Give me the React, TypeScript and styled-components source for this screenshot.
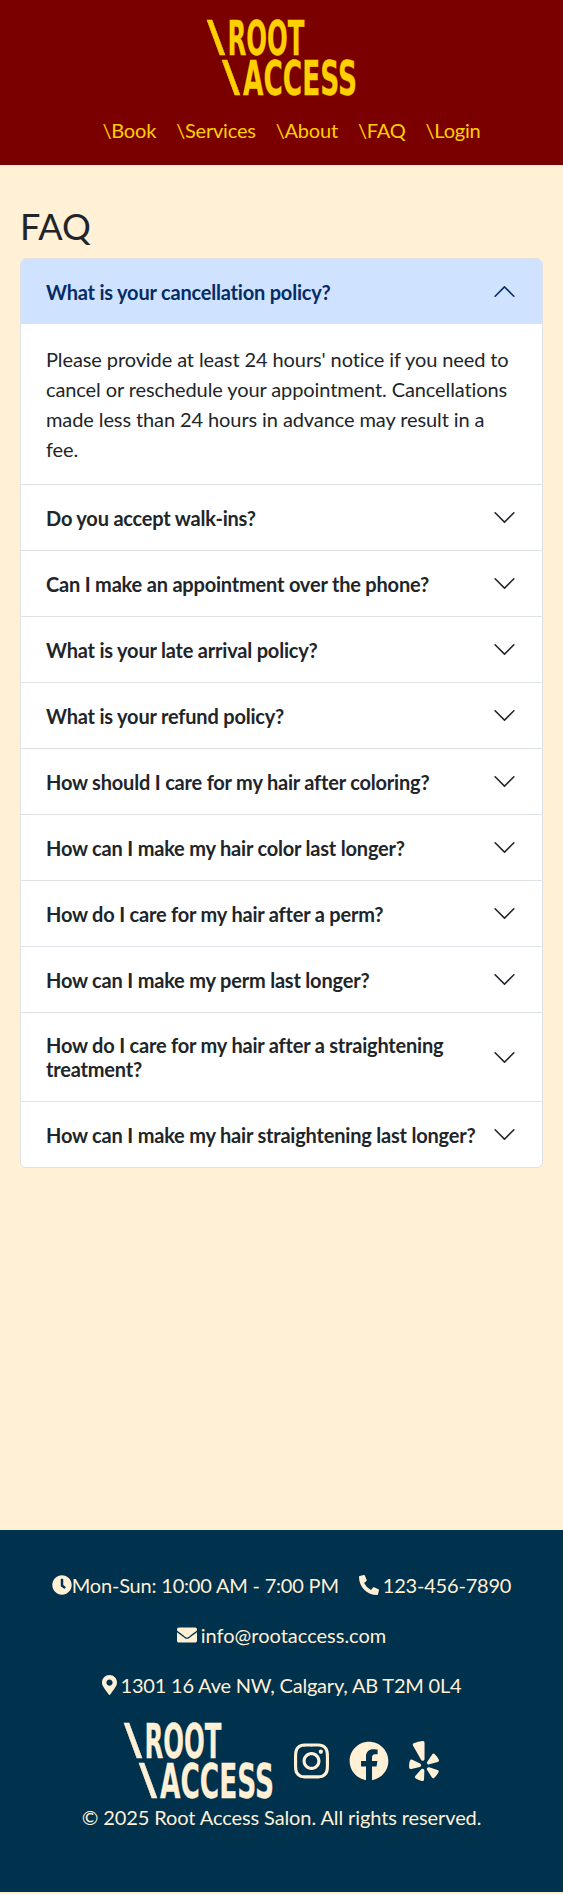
import React from 'react';
import styled, { createGlobalStyle } from 'styled-components';
import {
  FaClock,
  FaPhoneAlt,
  FaEnvelope,
  FaMapMarkerAlt,
  FaInstagram,
  FaFacebook,
  FaYelp,
} from 'react-icons/fa';

const QUESTIONS = [
  'Do you accept walk-ins?',
  'Can I make an appointment over the phone?',
  'What is your late arrival policy?',
  'What is your refund policy?',
  'How should I care for my hair after coloring?',
  'How can I make my hair color last longer?',
  'How do I care for my hair after a perm?',
  'How can I make my perm last longer?',
  'How do I care for my hair after a straightening treatment?',
  'How can I make my hair straightening last longer?',
];

const NAV_LINKS = ['\\Book', '\\Services', '\\About', '\\FAQ', '\\Login'];

const GlobalStyle = createGlobalStyle`
  * {
    box-sizing: border-box;
  }

  html,
  body {
    margin: 0;
    padding: 0;
    background: #fff0d6;
  }

  body {
    font-family: Lato, 'Liberation Sans', sans-serif;
    font-size: 20px;
    line-height: 1.5;
    letter-spacing: -0.2px;
    color: #212529;
  }
`;

function Logo({ color }: { color: string }) {
  return (
    <LogoSvg viewBox="0 0 150 75" width={150} height={75} fill={color} stroke={color} role="img" aria-label="Root Access">
      <text className="slash" x="0" y="35" textLength="18" lengthAdjust="spacingAndGlyphs">
        \
      </text>
      <text x="20.5" y="35" textLength="77" lengthAdjust="spacingAndGlyphs">
        ROOT
      </text>
      <text className="slash" x="15" y="75" textLength="18" lengthAdjust="spacingAndGlyphs">
        \
      </text>
      <text x="36" y="75" textLength="114" lengthAdjust="spacingAndGlyphs">
        ACCESS
      </text>
    </LogoSvg>
  );
}

function Chevron({ up }: { up?: boolean }) {
  return (
    <ChevronSvg viewBox="0 0 16 16" $up={up}>
      <path
        fillRule="evenodd"
        d="M1.646 4.646a.5.5 0 0 1 .708 0L8 10.293l5.646-5.647a.5.5 0 0 1 .708.708l-6 6a.5.5 0 0 1-.708 0l-6-6a.5.5 0 0 1 0-.708z"
      />
    </ChevronSvg>
  );
}

export default function App() {
  return (
    <Page>
      <GlobalStyle />
      <Header>
        <Logo color="#ffd000" />
        <Nav>
          {NAV_LINKS.map((link) => (
            <NavLink key={link}>{link}</NavLink>
          ))}
        </Nav>
      </Header>

      <Main>
        <Title>FAQ</Title>
        <Accordion>
          <Item>
            <Question $open>
              <span>What is your cancellation policy?</span>
              <Chevron up />
            </Question>
            <Answer>
              Please provide at least 24 hours' notice if you need to cancel or reschedule your
              appointment. Cancellations made less than 24 hours in advance may result in a fee.
            </Answer>
          </Item>
          {QUESTIONS.map((question) => (
            <Item key={question}>
              <Question>
                <span>{question}</span>
                <Chevron />
              </Question>
            </Item>
          ))}
        </Accordion>
      </Main>

      <Footer>
        <ContactRow>
          <Contact $gap={0}>
            <FaClock size={20} />
            Mon-Sun: 10:00 AM - 7:00 PM
          </Contact>
          <Contact>
            <FaPhoneAlt size={20} />
            123-456-7890
          </Contact>
        </ContactRow>
        <ContactRow>
          <Contact $spacing={0}>
            <FaEnvelope size={20} />
            info@rootaccess.com
          </Contact>
        </ContactRow>
        <ContactRow>
          <Contact>
            <MarkerIcon />
            1301 16 Ave NW, Calgary, AB T2M 0L4
          </Contact>
        </ContactRow>
        <BrandRow>
          <Logo color="#fff0d6" />
          <InstagramIcon />
          <FacebookIcon />
          <YelpIcon />
        </BrandRow>
        <Copyright>© 2025 Root Access Salon. All rights reserved.</Copyright>
      </Footer>
    </Page>
  );
}

const Page = styled.div`
  display: flex;
  flex-direction: column;
  min-height: 1894px;
  padding-bottom: 2px;
`;

const LogoSvg = styled.svg`
  display: block;
  flex: none;
  overflow: visible;

  text {
    font-family: 'DejaVu Sans', sans-serif;
    font-weight: 700;
    font-size: 48px;
    letter-spacing: 0;
    stroke-width: 0.3px;
  }

  .slash {
    font-family: 'Liberation Sans', sans-serif;
    font-weight: 400;
    stroke-width: 0.4px;
  }
`;

const Header = styled.header`
  display: flex;
  flex-direction: column;
  align-items: center;
  height: 165px;
  padding-top: 20px;
  background: #7a0000;
`;

const Nav = styled.nav`
  display: flex;
  justify-content: center;
  gap: 20px;
  margin-top: 20px;
  padding-left: 20px;
`;

const NavLink = styled.a`
  color: #ffd000;
  line-height: 30px;
`;

const Main = styled.main`
  flex: 1;
  padding: 40px 20px 0;
`;

const Title = styled.h1`
  margin: 0 0 10px;
  font-size: 36px;
  font-weight: 400;
  line-height: 43px;
  letter-spacing: 0;
`;

const Accordion = styled.div`
  overflow: hidden;
  background: #fff;
  border: 1px solid #dee2e6;
  border-radius: 6px;
`;

const Item = styled.div`
  & + & {
    border-top: 1px solid #dee2e6;
  }
`;

const Question = styled.div<{ $open?: boolean }>`
  display: flex;
  align-items: center;
  justify-content: space-between;
  gap: 10px;
  padding: 20px 25px;
  font-weight: 700;
  line-height: 24px;
  color: ${({ $open }) => ($open ? '#052c65' : '#212529')};
  background: ${({ $open }) => ($open ? '#cfe2ff' : 'transparent')};
`;

const ChevronSvg = styled.svg<{ $up?: boolean }>`
  flex: none;
  width: 25px;
  height: 25px;
  fill: ${({ $up }) => ($up ? '#052c65' : '#212529')};
  transform: ${({ $up }) => ($up ? 'rotate(180deg)' : 'none')};
`;

const Answer = styled.div`
  padding: 20px 30px 20px 25px;
  letter-spacing: -0.1px;
`;

const Footer = styled.footer`
  display: flex;
  flex-direction: column;
  align-items: center;
  height: 362px;
  padding-top: 40px;
  color: #fff0d6;
  background: #00314d;
`;

const ContactRow = styled.div`
  display: flex;
  justify-content: center;
  gap: 20px;
  margin-bottom: 20px;
`;

const Contact = styled.div<{ $gap?: number; $spacing?: number }>`
  display: flex;
  align-items: center;
  gap: ${({ $gap }) => $gap ?? 4}px;
  letter-spacing: ${({ $spacing }) => $spacing ?? -0.2}px;
`;

const MarkerIcon = styled(FaMapMarkerAlt)`
  width: 15px;
  height: 20px;
`;

const BrandRow = styled.div`
  display: flex;
  align-items: center;
  gap: 20px;
  margin-top: 3px;
`;

const InstagramIcon = styled(FaInstagram)`
  width: 35px;
  height: 40px;
`;

const FacebookIcon = styled(FaFacebook)`
  width: 40px;
  height: 40px;
`;

const YelpIcon = styled(FaYelp)`
  width: 30px;
  height: 40px;
`;

const Copyright = styled.div`
  margin-top: 4px;
  letter-spacing: -0.1px;
`;
